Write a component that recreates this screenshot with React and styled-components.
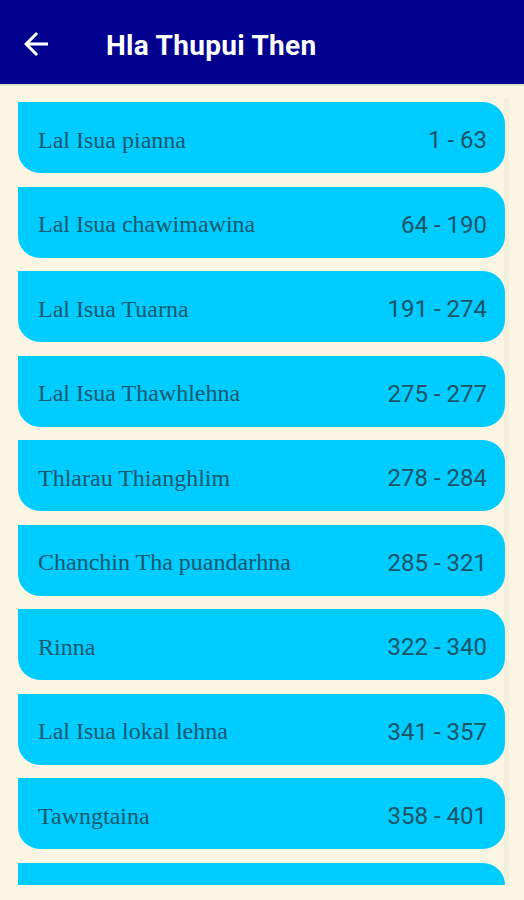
import React from 'react';
import styled, { createGlobalStyle } from 'styled-components';

const GlobalStyle = createGlobalStyle`
  html, body {
    margin: 0;
    padding: 0;
    background: #faf6e3;
  }
  * { box-sizing: border-box; }
`;

const Page = styled.div`
  width: 524px;
  height: 900px;
  background: #faf6e3;
  display: flex;
  flex-direction: column;
  overflow: hidden;
`;

const TopBar = styled.header`
  height: 84px;
  flex-shrink: 0;
  background: #01008f;
  display: flex;
  align-items: center;
  padding: 4px 0 0 18px;
  box-shadow: 0 1px 2px rgba(0, 0, 0, 0.2);
  position: relative;
  z-index: 2;
`;

const BackButton = styled.button`
  width: 36px;
  height: 36px;
  padding: 0;
  border: none;
  background: transparent;
  display: flex;
  align-items: center;
  justify-content: center;
  cursor: pointer;
`;

const Title = styled.h1`
  margin: 0 0 0 52px;
  padding-top: 3px;
  font-family: Roboto, 'Liberation Sans', sans-serif;
  font-weight: 700;
  font-size: 28px;
  letter-spacing: 0.3px;
  color: #ffffff;
`;

const ListArea = styled.div`
  height: 801px;
  position: relative;
  overflow: hidden;
`;

const List = styled.ul`
  list-style: none;
  margin: 0;
  padding: 18px 19px 0 18px;
  display: flex;
  flex-direction: column;
  gap: 13.5px;
`;

const ScrollTrack = styled.div`
  position: absolute;
  top: 14px;
  right: 15px;
  bottom: 0;
  width: 5px;
  background: #f3efdb;
`;

const Chapter = styled.li`
  height: 71px;
  flex-shrink: 0;
  background: #00ccff;
  border-radius: 0 22px 22px 22px;
  display: flex;
  align-items: center;
  justify-content: space-between;
  padding: 5px 18px 0 20px;
  position: relative;
  z-index: 1;
`;

const ChapterName = styled.span`
  font-family: 'Liberation Serif', 'Times New Roman', serif;
  font-size: 24px;
  color: #17596e;
`;

const ChapterRange = styled.span`
  font-family: Roboto, 'Liberation Sans', sans-serif;
  font-size: 24px;
  color: #1b5567;
`;

const chapters = [
  { name: 'Lal Isua pianna', range: '1 - 63' },
  { name: 'Lal Isua chawimawina', range: '64 - 190' },
  { name: 'Lal Isua Tuarna', range: '191 - 274' },
  { name: 'Lal Isua Thawhlehna', range: '275 - 277' },
  { name: 'Thlarau Thianghlim', range: '278 - 284' },
  { name: 'Chanchin Tha puandarhna', range: '285 - 321' },
  { name: 'Rinna', range: '322 - 340' },
  { name: 'Lal Isua lokal lehna', range: '341 - 357' },
  { name: 'Tawngtaina', range: '358 - 401' },
  { name: '', range: '' },
];

function ArrowBack() {
  return (
    <svg width="36" height="36" viewBox="0 0 24 24" fill="#ffffff">
      <path d="M20 11H7.83l5.59-5.59L12 4l-8 8 8 8 1.41-1.41L7.83 13H20v-2z" />
    </svg>
  );
}

export default function App() {
  return (
    <>
      <GlobalStyle />
      <Page>
        <TopBar>
          <BackButton aria-label="Back">
            <ArrowBack />
          </BackButton>
          <Title>Hla Thupui Then</Title>
        </TopBar>
        <ListArea>
          <ScrollTrack />
          <List>
            {chapters.map((c, i) => (
              <Chapter key={i}>
                <ChapterName>{c.name}</ChapterName>
                <ChapterRange>{c.range}</ChapterRange>
              </Chapter>
            ))}
          </List>
        </ListArea>
      </Page>
    </>
  );
}
